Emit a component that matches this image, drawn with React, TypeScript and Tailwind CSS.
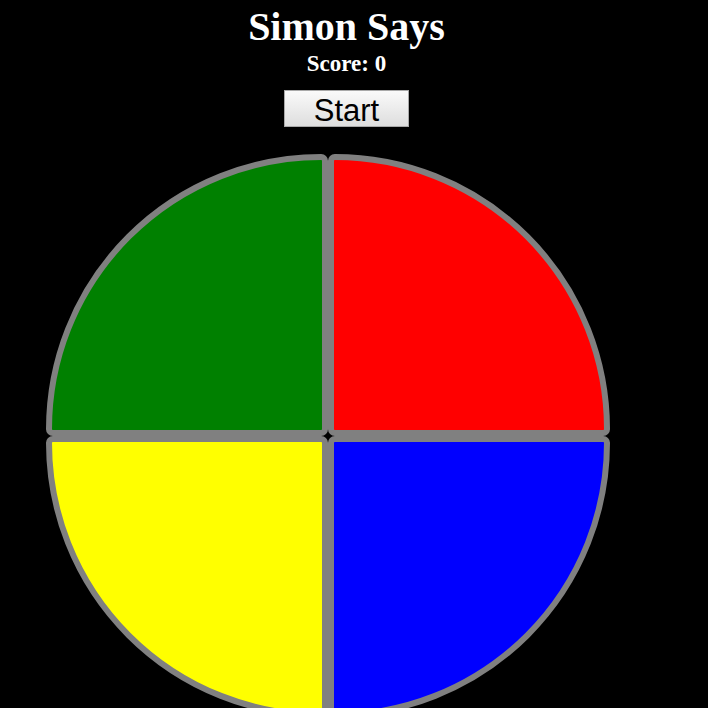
import React from "react";

const PADS = [
  { id: "green", className: "bg-[#008000] rounded-tl-[282px] rounded-tr-[7px] rounded-bl-[7px] rounded-br-[7px]" },
  { id: "red", className: "bg-[#ff0000] rounded-tr-[282px] rounded-tl-[7px] rounded-bl-[7px] rounded-br-[7px]" },
  { id: "yellow", className: "bg-[#ffff00] rounded-bl-[282px] rounded-tl-[7px] rounded-tr-[7px] rounded-br-[7px]" },
  { id: "blue", className: "bg-[#0000ff] rounded-br-[282px] rounded-tl-[7px] rounded-tr-[7px] rounded-bl-[7px]" },
];

const App: React.FC = () => {
  const [score] = React.useState(0);

  return (
    <div className="h-[708px] w-[708px] overflow-hidden bg-black">
      <div className="flex w-[693px] flex-col items-center">
        <h1 className="mt-[4px] font-['Liberation_Serif',serif] text-[40px] font-bold leading-[46px] text-white">
          Simon Says
        </h1>
        <p className="font-['Liberation_Serif',serif] text-[23px] font-bold leading-[27px] text-white">
          Score: {score}
        </p>
        <button className="mt-[13px] flex h-[37px] w-[125px] items-center justify-center border border-[#a9a9a9] bg-gradient-to-b from-[#fafafa] to-[#dedede] pt-[3px] font-['Liberation_Sans',Arial,sans-serif] text-[31px] leading-none text-black">
          Start
        </button>
      </div>

      <div className="ml-[46px] mt-[27px] grid w-[564px] grid-cols-2">
        {PADS.map(pad => (
          <div
            key={pad.id}
            className={`h-[282px] w-[282px] border-[6px] border-[#808080] ${pad.className}`}
          />
        ))}
      </div>
    </div>
  );
};

export default App;
